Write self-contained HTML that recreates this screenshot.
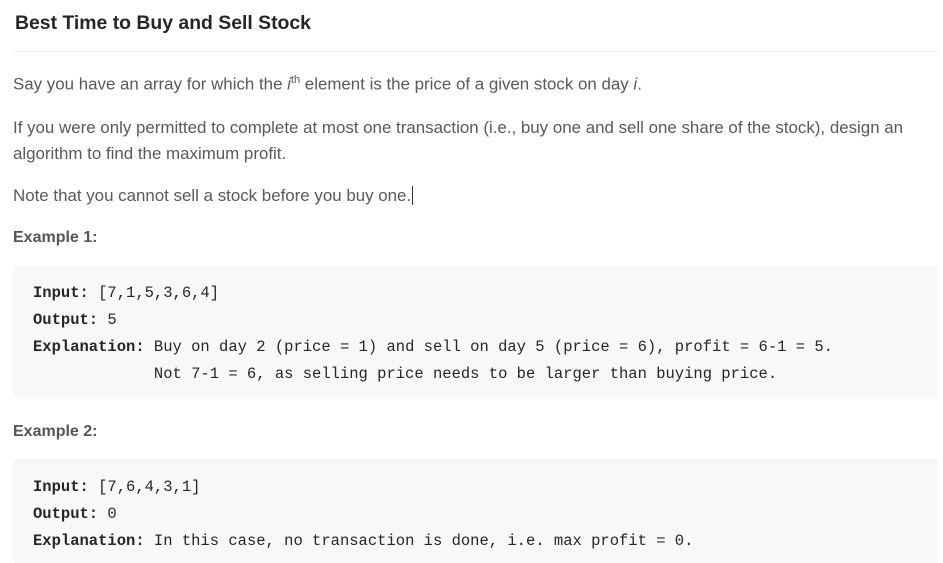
<!DOCTYPE html>
<html><head><meta charset="utf-8"><style>
body{margin:0;background:#fff;width:943px;height:563px;overflow:hidden;font-family:"Liberation Sans",sans-serif;}
.t{position:absolute;left:15px;top:12px;font-size:19.4px;font-weight:bold;color:#262626;}
.hr{position:absolute;left:13px;top:51px;width:925px;height:1px;background:#eee;}
p{position:absolute;left:13px;margin:0;font-size:16.9px;color:#595959;line-height:26px;width:915px;}
.ex{font-weight:bold;color:#555;font-size:16px;}
.box{position:absolute;left:13px;width:925px;background:#f7f8fa;border-radius:3px;}
pre{position:absolute;left:33px;margin:0;font-family:"Liberation Mono",monospace;font-size:15.5px;line-height:27px;color:#262626;}
pre b{color:#262626;}
</style></head><body>
<div class="t">Best Time to Buy and Sell Stock</div>
<div class="hr"></div>
<p style="top:67px">Say you have an array for which the <i>i</i><sup style="font-size:11px">th</sup> element is the price of a given stock on day <i>i</i>.</p>
<p style="top:115px">If you were only permitted to complete at most one transaction (i.e., buy one and sell one share of the stock), design an algorithm to find the maximum profit.</p>
<p style="top:183px">Note that you cannot sell a stock before you buy one.<span style="border-left:1px solid #333;margin-left:1px"></span></p>
<p class="ex" style="top:225px">Example 1:</p>
<div class="box" style="top:265px;height:133px"></div>
<pre style="top:280px"><b>Input:</b> [7,1,5,3,6,4]
<b>Output:</b> 5
<b>Explanation:</b> Buy on day 2 (price = 1) and sell on day 5 (price = 6), profit = 6-1 = 5.
             Not 7-1 = 6, as selling price needs to be larger than buying price.</pre>
<p class="ex" style="top:419px">Example 2:</p>
<div class="box" style="top:459px;height:104px"></div>
<pre style="top:474px"><b>Input:</b> [7,6,4,3,1]
<b>Output:</b> 0
<b>Explanation:</b> In this case, no transaction is done, i.e. max profit = 0.</pre>
</body></html>
